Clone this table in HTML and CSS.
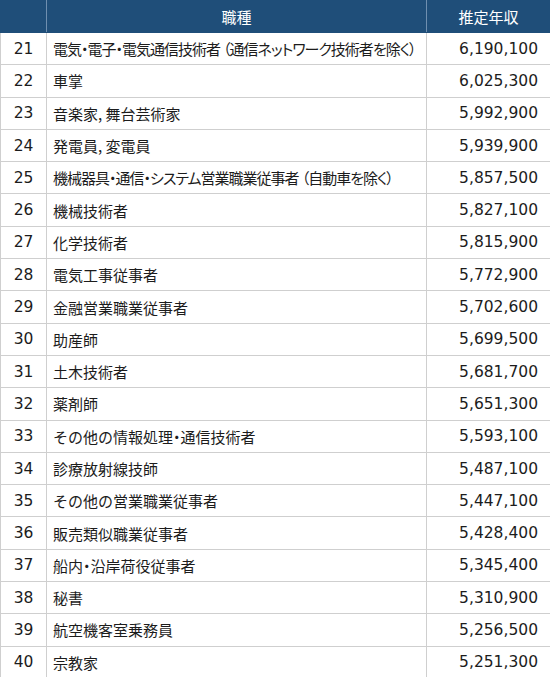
FILE: index.html
```html
<!DOCTYPE html>
<html lang="ja">
<head>
<meta charset="utf-8">
<link rel="stylesheet" href="styles.css">
</head>
<body>
<table class="salary">
<colgroup><col class="c-rank"><col class="c-job"><col class="c-pay"></colgroup>
<thead>
<tr><th></th><th class="h-job">職種</th><th class="h-pay">推定年収</th></tr>
</thead>
<tbody>
<tr><td class="rank">21</td><td class="job tight">電気・電子・電気通信技術者<span class="lp">（</span>通信ネットワーク技術者を除く）</td><td class="pay">6,190,100</td></tr>
<tr><td class="rank">22</td><td class="job">車掌</td><td class="pay">6,025,300</td></tr>
<tr><td class="rank">23</td><td class="job">音楽家, 舞台芸術家</td><td class="pay">5,992,900</td></tr>
<tr><td class="rank">24</td><td class="job">発電員, 変電員</td><td class="pay">5,939,900</td></tr>
<tr><td class="rank">25</td><td class="job tight">機械器具・通信・システム営業職業従事者<span class="lp">（</span>自動車を除く）</td><td class="pay">5,857,500</td></tr>
<tr><td class="rank">26</td><td class="job">機械技術者</td><td class="pay">5,827,100</td></tr>
<tr><td class="rank">27</td><td class="job">化学技術者</td><td class="pay">5,815,900</td></tr>
<tr><td class="rank">28</td><td class="job">電気工事従事者</td><td class="pay">5,772,900</td></tr>
<tr><td class="rank">29</td><td class="job">金融営業職業従事者</td><td class="pay">5,702,600</td></tr>
<tr><td class="rank">30</td><td class="job">助産師</td><td class="pay">5,699,500</td></tr>
<tr><td class="rank">31</td><td class="job">土木技術者</td><td class="pay">5,681,700</td></tr>
<tr><td class="rank">32</td><td class="job">薬剤師</td><td class="pay">5,651,300</td></tr>
<tr><td class="rank">33</td><td class="job">その他の情報処理<span class="nb">・</span>通信技術者</td><td class="pay">5,593,100</td></tr>
<tr><td class="rank">34</td><td class="job">診療放射線技師</td><td class="pay">5,487,100</td></tr>
<tr><td class="rank">35</td><td class="job">その他の営業職業従事者</td><td class="pay">5,447,100</td></tr>
<tr><td class="rank">36</td><td class="job">販売類似職業従事者</td><td class="pay">5,428,400</td></tr>
<tr><td class="rank">37</td><td class="job">船内<span class="nb">・</span>沿岸荷役従事者</td><td class="pay">5,345,400</td></tr>
<tr><td class="rank">38</td><td class="job">秘書</td><td class="pay">5,310,900</td></tr>
<tr><td class="rank">39</td><td class="job">航空機客室乗務員</td><td class="pay">5,256,500</td></tr>
<tr><td class="rank">40</td><td class="job">宗教家</td><td class="pay">5,251,300</td></tr>
</tbody>
</table>
</body>
</html>
```
FILE: styles.css
```css
html, body {
  margin: 0;
  padding: 0;
  background: #ffffff;
}
.salary {
  width: 550px;
  border-collapse: collapse;
  table-layout: fixed;
  color: #1c1c1c;
}
.c-rank { width: 46px; }
.c-job { width: 380px; }
.c-pay { width: 124px; }
.salary th {
  background: #1f4e79;
  color: #ffffff;
  font-family: "Noto Sans CJK JP", sans-serif;
  font-weight: normal;
  font-size: 15px;
  height: 31px;
  padding: 0;
  border: 1px solid #1f4e79;
  border-right-color: #6f8fb0;
  text-align: center;
}
.salary th:last-child { border-right-color: #1f4e79; }
.salary td {
  height: 31.3px;
  padding: 0;
  border: 1px solid #cfcfcf;
  vertical-align: middle;
}
.rank {
  font-family: "DejaVu Sans", sans-serif;
  font-size: 15.5px;
  text-align: center;
}
.job {
  font-family: "Noto Sans CJK JP", sans-serif;
  font-size: 15px;
  padding-left: 6px !important;
  white-space: nowrap;
}
.job.tight {
  font-feature-settings: "palt";
  letter-spacing: -1px;
}
.lp {
  margin-left: 3px;
}
.nb {
  font-feature-settings: "palt";
}
.pay {
  font-family: "DejaVu Sans", sans-serif;
  font-size: 15.5px;
  text-align: right;
  padding-right: 12px !important;
}
```
